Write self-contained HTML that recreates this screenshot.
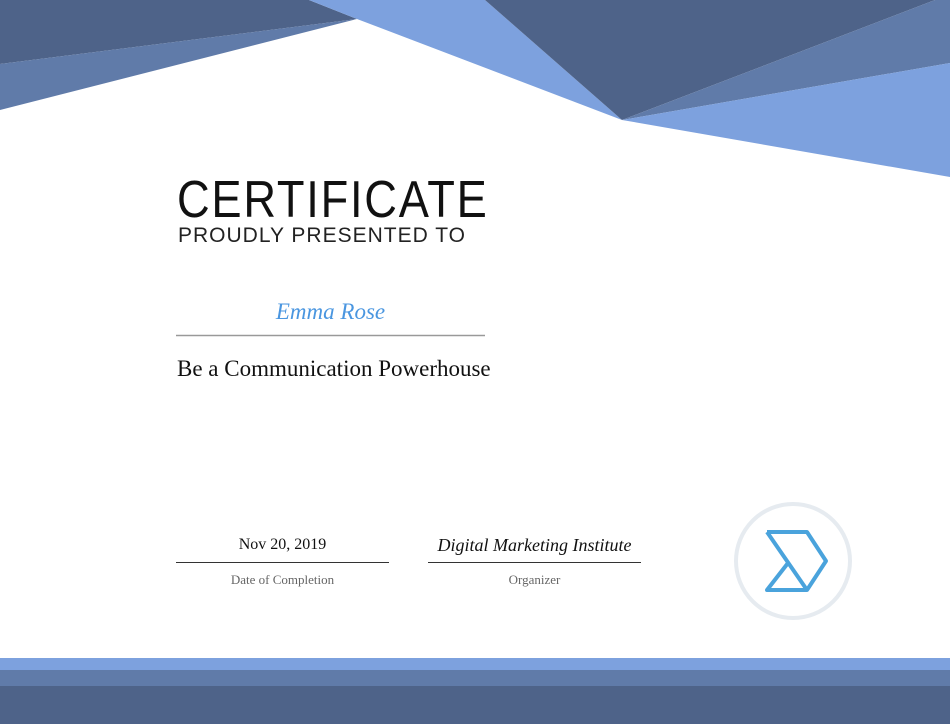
<!DOCTYPE html>
<html><head><meta charset="utf-8"><style>
html,body{margin:0;padding:0;background:#fff;}
body{width:950px;height:724px;position:relative;overflow:hidden;}
.a{position:absolute;white-space:nowrap;}
.serif{font-family:"Liberation Serif",serif;}
</style></head><body>
<svg class="a" style="left:0;top:0" width="950" height="724" viewBox="0 0 950 724">
<polygon points="0,0 309,0 357,19 0,64" fill="#4e6389"/>
<polygon points="0,64 357,19 0,110" fill="#607ba9"/>
<polygon points="309,0 485,0 622,120 357,19" fill="#7da1de"/>
<polygon points="485,0 935,0 622,120" fill="#4e6389"/>
<polygon points="935,0 950,0 950,63 622,120" fill="#607ba9"/>
<polygon points="950,63 950,177 622,120" fill="#7da1de"/>
<rect x="0" y="658" width="950" height="12" fill="#7da1de"/>
<rect x="0" y="670" width="950" height="16" fill="#607ba9"/>
<rect x="0" y="686" width="950" height="38" fill="#4e6389"/>
<line x1="176" y1="335.5" x2="485" y2="335.5" stroke="#999" stroke-width="1.5"/>
<line x1="176" y1="562.5" x2="389" y2="562.5" stroke="#333" stroke-width="1"/>
<line x1="428" y1="562.5" x2="641" y2="562.5" stroke="#333" stroke-width="1"/>
<circle cx="793" cy="561" r="57" fill="none" stroke="#e6ebf0" stroke-width="4"/>
<path d="M767,532 L807,532 L826,561 L807,590 L767,590 L788,563 M767,532 L807,590" fill="none" stroke="#4aa3dc" stroke-width="4" stroke-linejoin="round"/>
</svg>
<div class="a" style="left:177px;top:170px;font-family:'Liberation Sans',sans-serif;font-size:52px;letter-spacing:2px;color:#111;line-height:60px;transform:scaleX(0.87);transform-origin:0 0;">CERTIFICATE</div>
<div class="a" style="left:178px;top:223px;font-family:'Liberation Sans',sans-serif;font-size:21px;letter-spacing:1px;color:#222;line-height:26px;">PROUDLY PRESENTED TO</div>
<div class="a serif" style="left:176px;width:309px;text-align:center;top:297px;font-size:23px;font-style:italic;color:#4a96e0;line-height:30px;">Emma Rose</div>
<div class="a serif" style="left:177px;top:354px;font-size:23px;color:#111;line-height:30px;">Be a Communication Powerhouse</div>
<div class="a serif" style="left:176px;width:213px;text-align:center;top:534px;font-size:16px;color:#111;line-height:22px;">Nov 20, 2019</div>
<div class="a serif" style="left:176px;width:213px;text-align:center;top:571px;font-size:13px;color:#666;line-height:18px;">Date of Completion</div>
<div class="a serif" style="left:418px;width:233px;text-align:center;top:534px;font-size:18px;font-style:italic;color:#111;line-height:22px;">Digital Marketing Institute</div>
<div class="a serif" style="left:428px;width:213px;text-align:center;top:571px;font-size:13px;color:#666;line-height:18px;">Organizer</div>
</body></html>
